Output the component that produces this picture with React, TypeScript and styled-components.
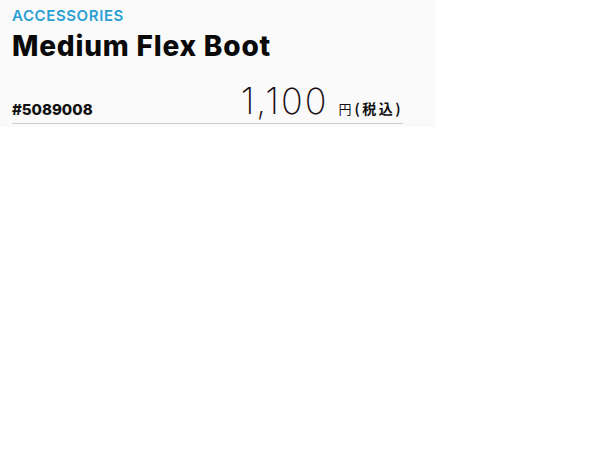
import { createGlobalStyle, styled } from "styled-components";

const Global = createGlobalStyle`
    body {
        margin: 0;
        background: #fff;
        font-family: "Inter", "Noto Sans CJK JP", sans-serif;
    }
`;

export default function App() {
    return (
        <>
            <Global />
            <Card>
                <Category>ACCESSORIES</Category>
                <Name>Medium Flex Boot</Name>
                <Footer>
                    <Code>#5089008</Code>
                    <Price>
                        <PriceNum>1,100</PriceNum>
                        <Yen>円</Yen>
                        <Tax>(税込)</Tax>
                    </Price>
                </Footer>
            </Card>
        </>
    );
}

const Card = styled.div`
    width: 436px;
    height: 127px;
    box-sizing: border-box;
    padding: 7px 33px 0 12px;
    background: #fafafa;
`;

const Category = styled.div`
    color: #2a9fd3;
    font-weight: 600;
    font-size: 15px;
    letter-spacing: 0.6px;
    line-height: 17px;
`;

const Name = styled.h1`
    margin: 7px 0 0;
    font-weight: 800;
    font-size: 28px;
    letter-spacing: 0.8px;
    line-height: 30px;
    color: #0a0a0a;
`;

const Footer = styled.div`
    display: flex;
    align-items: flex-end;
    justify-content: space-between;
    margin-top: 23px;
    padding-bottom: 5px;
    border-bottom: 1px solid #cfcfcf;
`;

const Code = styled.span`
    font-weight: 800;
    font-size: 15px;
    line-height: 16px;
    color: #111;
`;

const Price = styled.div`
    display: flex;
    align-items: baseline;
`;

const PriceNum = styled.span`
    font-weight: 200;
    font-size: 36px;
    letter-spacing: 2px;
    line-height: 34px;
    color: #1a0f14;
    margin-right: 10px;
`;

const Yen = styled.span`
    font-family: "Noto Sans CJK JP", sans-serif;
    font-size: 13px;
    color: #111;
`;

const Tax = styled.span`
    font-family: "Noto Sans CJK JP", sans-serif;
    font-size: 14px;
    font-weight: 700;
    letter-spacing: 2.5px;
    color: #111;
    margin-left: 3px;
`;
